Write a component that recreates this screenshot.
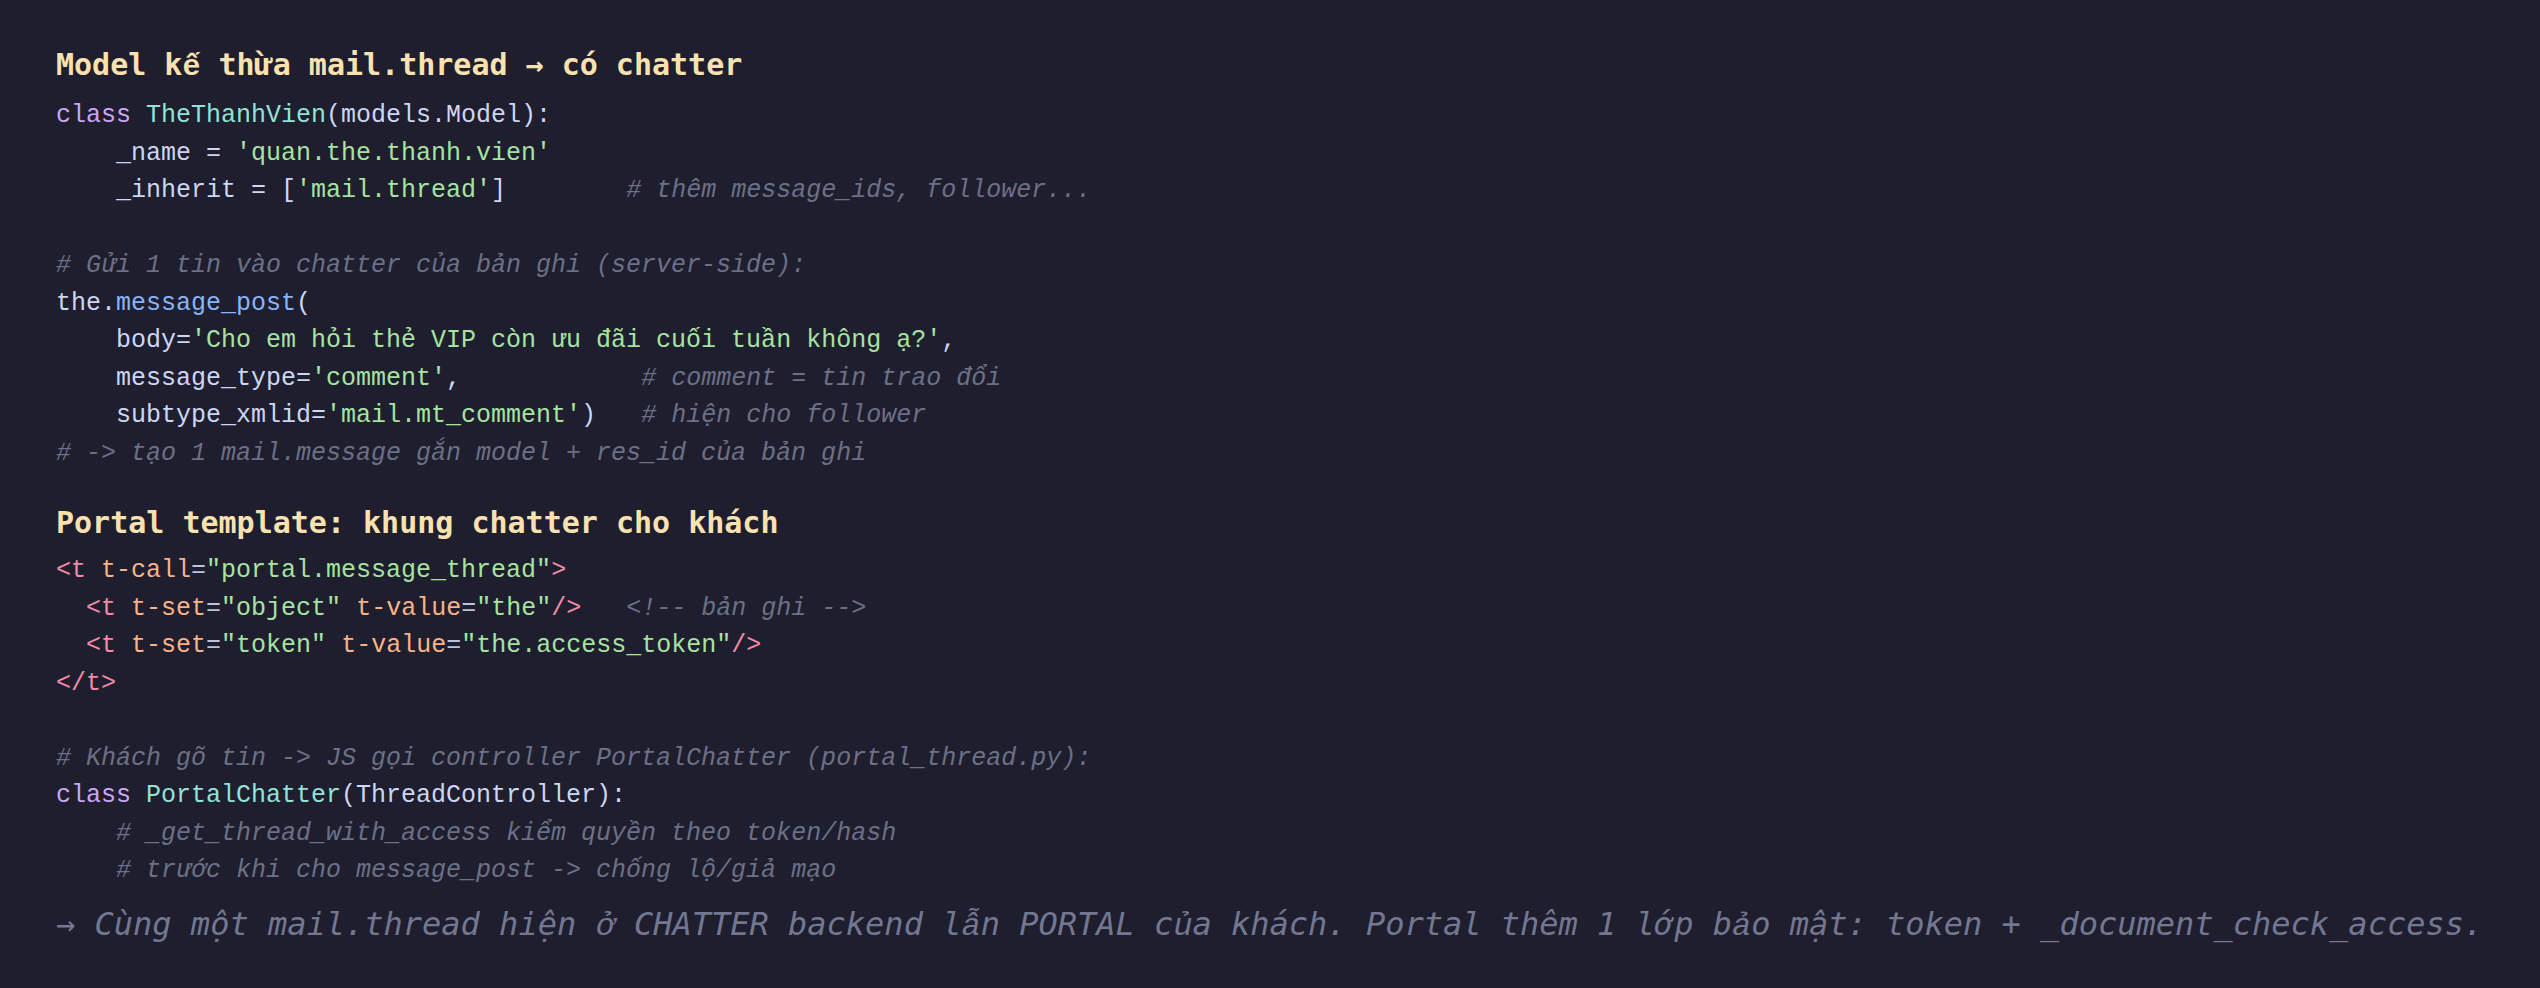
const mono = "font-['Liberation_Mono',monospace]";
const sans = "font-['DejaVu_Sans_Mono',monospace]";

const C = {
  kw: "text-[#cba6f7]",
  cls: "text-[#94e2d5]",
  txt: "text-[#cdd6f4]",
  str: "text-[#a6e3a1]",
  fn: "text-[#89b4fa]",
  cm: "text-[#6c7086] italic",
  tag: "text-[#f38ba8]",
  attr: "text-[#fab387]",
  eq: "text-[#bac2de]",
};

// DejaVu Sans Mono has no glyph for some Vietnamese letters, so these fall back
function V({ children }: { children: string }) {
  return <span className={mono}>{children.normalize("NFC")}</span>;
}

function Heading({ children }: { children: React.ReactNode }) {
  return (
    <h2 className={`${sans} text-[30px] leading-[40px] font-bold text-[#f9e2af] whitespace-nowrap`}>
      {children}
    </h2>
  );
}

function Code({ children }: { children: React.ReactNode }) {
  return (
    <pre className={`${mono} text-[25px] leading-[37.5px] text-[#cdd6f4] whitespace-pre`}>
      {children}
    </pre>
  );
}

export default function App() {
  return (
    <div className="min-h-screen bg-[#1e1e2e] pl-[56px] pt-[45px]">
      <Heading>
        Model k<V>ế</V> thừa mail.thread → có chatter
      </Heading>
      <div className="mt-[10px]">
        <Code>
          <span className={C.kw}>class</span> <span className={C.cls}>TheThanhVien</span>(models.Model):{"\n"}
          {"    "}_name = <span className={C.str}>'quan.the.thanh.vien'</span>{"\n"}
          {"    "}_inherit = [<span className={C.str}>'mail.thread'</span>]{"        "}
          <span className={C.cm}># thêm message_ids, follower...</span>{"\n"}
          {"\n"}
          <span className={C.cm}># Gửi 1 tin vào chatter của bản ghi (server-side):</span>{"\n"}
          the.<span className={C.fn}>message_post</span>({"\n"}
          {"    "}body=<span className={C.str}>'Cho em hỏi thẻ VIP còn ưu đãi cuối tuần không ạ?'</span>,{"\n"}
          {"    "}message_type=<span className={C.str}>'comment'</span>,{"            "}
          <span className={C.cm}># comment = tin trao đổi</span>{"\n"}
          {"    "}subtype_xmlid=<span className={C.str}>'mail.mt_comment'</span>){"   "}
          <span className={C.cm}># hiện cho follower</span>{"\n"}
          <span className={C.cm}># -&gt; tạo 1 mail.message gắn model + res_id của bản ghi</span>
        </Code>
      </div>

      <div className="mt-[31px]">
        <Heading>Portal template: khung chatter cho khách</Heading>
      </div>
      <div className="mt-[9px]">
        <Code>
          <span className={C.tag}>&lt;t</span> <span className={C.attr}>t-call</span>
          <span className={C.eq}>=</span><span className={C.str}>"portal.message_thread"</span>
          <span className={C.tag}>&gt;</span>{"\n"}
          {"  "}<span className={C.tag}>&lt;t</span> <span className={C.attr}>t-set</span>
          <span className={C.eq}>=</span><span className={C.str}>"object"</span> <span className={C.attr}>t-value</span>
          <span className={C.eq}>=</span><span className={C.str}>"the"</span>
          <span className={C.tag}>/&gt;</span>{"   "}
          <span className={C.cm}>&lt;!-- bản ghi --&gt;</span>{"\n"}
          {"  "}<span className={C.tag}>&lt;t</span> <span className={C.attr}>t-set</span>
          <span className={C.eq}>=</span><span className={C.str}>"token"</span> <span className={C.attr}>t-value</span>
          <span className={C.eq}>=</span><span className={C.str}>"the.access_token"</span>
          <span className={C.tag}>/&gt;</span>{"\n"}
          <span className={C.tag}>&lt;/t&gt;</span>{"\n"}
          {"\n"}
          <span className={C.cm}># Khách gõ tin -&gt; JS gọi controller PortalChatter (portal_thread.py):</span>{"\n"}
          <span className={C.kw}>class</span> <span className={C.cls}>PortalChatter</span>(ThreadController):{"\n"}
          {"    "}<span className={C.cm}># _get_thread_with_access kiểm quyền theo token/hash</span>{"\n"}
          {"    "}<span className={C.cm}># trước khi cho message_post -&gt; chống lộ/giả mạo</span>
        </Code>
      </div>

      <p className={`${sans} mt-[10px] text-[32px] leading-[48px] italic text-[#737791] whitespace-nowrap`}>
        → Cùng một mail.thread hiện <V>ở</V> CHATTER backend l<V>ẫ</V>n PORTAL c<V>ủ</V>a khách. Portal thêm 1 lớp b<V>ả</V>o mật: token + _document_check_access.
      </p>
    </div>
  );
}
